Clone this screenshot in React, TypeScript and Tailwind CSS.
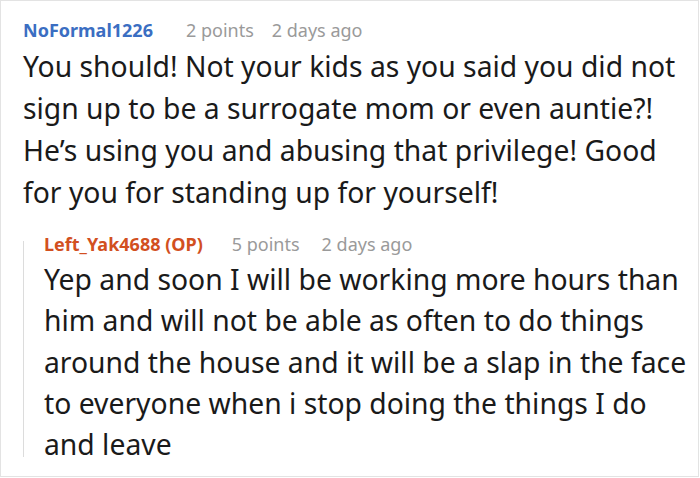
const font = { fontFamily: '"Noto Sans", "Open Sans", sans-serif' }

const firstLines = [
  'You should! Not your kids as you said you did not',
  'sign up to be a surrogate mom or even auntie?!',
  'He’s using you and abusing that privilege! Good',
  'for you for standing up for yourself!',
]

const replyLines = [
  'Yep and soon I will be working more hours than',
  'him and will not be able as often to do things',
  'around the house and it will be a slap in the face',
  'to everyone when i stop doing the things I do',
  'and leave',
]

export default function App() {
  return (
    <div className="w-[700px] h-[478px] bg-white overflow-hidden" style={font}>
      <div className="w-[699px] h-[477px] border border-[#e3e3e3] pl-[22px] pr-1 pt-[15px]">
        <div className="flex items-baseline text-[18px] leading-[28px]">
          <span className="font-bold text-[#3b6ec2]">NoFormal1226</span>
          <span className="ml-[33px] text-[#9a9a9a]">2 points</span>
          <span className="ml-[18px] text-[#9a9a9a]">2 days ago</span>
        </div>
        <p className="mt-[1px] text-[28.3px] leading-[42px] text-[#1a1a1a]">
          {firstLines.map((l, i) => (
            <span key={i} className="block whitespace-nowrap">{l}</span>
          ))}
        </p>
        <div className="mt-[17px] flex">
          <div className="w-px mt-[11px] mb-[8px] bg-[#dcdcdc] shrink-0" />
          <div className="pl-[20px]">
            <div className="flex items-baseline text-[18px] leading-[28px]">
              <span className="font-bold text-[#d2501f]">Left_Yak4688 (OP)</span>
              <span className="ml-[29px] text-[#9a9a9a]">5 points</span>
              <span className="ml-[22px] text-[#9a9a9a]">2 days ago</span>
            </div>
            <p className="mt-[1px] text-[28.3px] leading-[41.3px] text-[#1a1a1a]">
              {replyLines.map((l, i) => (
                <span key={i} className="block whitespace-nowrap">{l}</span>
              ))}
            </p>
          </div>
        </div>
      </div>
    </div>
  )
}
